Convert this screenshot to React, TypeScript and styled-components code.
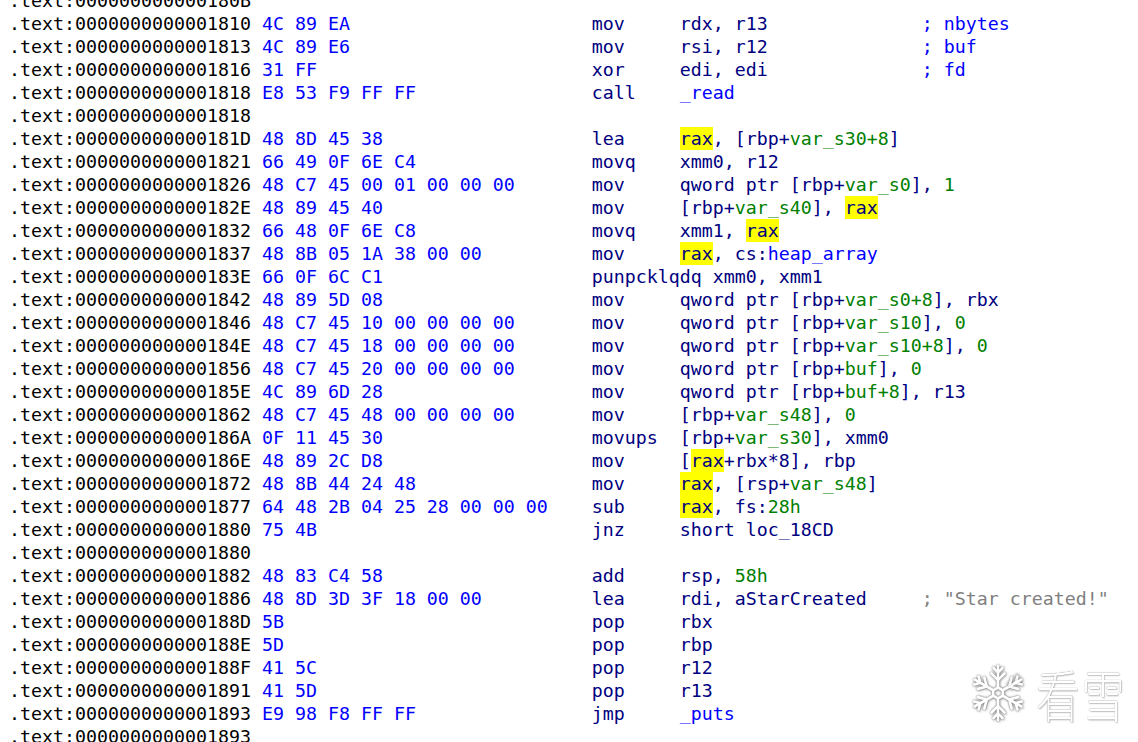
import React from 'react';
import styled, { createGlobalStyle } from 'styled-components';

type Kind = 'r' | 'v' | 'n' | 'h';

const Global = createGlobalStyle`
  html, body { margin: 0; padding: 0; background: #ffffff; }
  body { overflow: hidden; }
`;

const Screen = styled.div`
  position: relative;
  width: 1138px;
  height: 742px;
  overflow: hidden;
  background: #ffffff;
`;

const Listing = styled.div`
  display: flex;
  flex-direction: column;
  margin-top: -11.5px;
  padding-left: 9px;
  font-family: "DejaVu Sans Mono", "Liberation Mono", monospace;
  font-size: 18.27px;
  line-height: 23px;
  white-space: pre;
`;

const Row = styled.div`
  display: flex;
  height: 23px;
`;

const Addr = styled.span`
  flex: none;
  width: 23ch;
  color: #000000;
`;

const Bytes = styled.span`
  flex: none;
  width: 30ch;
  color: #0000ff;
`;

const Mnem = styled.span`
  flex: none;
  min-width: 7ch;
  margin-right: 1ch;
  color: #000080;
`;

const Ops = styled.span<{ $w?: number }>`
  flex: none;
  color: #000080;
  ${(p) => (p.$w ? `width: ${p.$w}ch;` : '')}
`;

const tokColor: Record<Kind, string> = {
  r: '#000080',
  v: '#008000',
  n: '#0000ff',
  h: '#000080',
};

const Tok = styled.span<{ $k: Kind }>`
  color: ${(p) => tokColor[p.$k]};
  ${(p) =>
    p.$k === 'h'
      ? `display: inline-block; height: 23px; background: #ffff00;`
      : ''}
`;

const Comment = styled.span<{ $tone: 'blue' | 'gray' }>`
  flex: none;
  color: ${(p) => (p.$tone === 'blue' ? '#0000ff' : '#808080')};
`;

const Watermark = styled.div`
  position: absolute;
  left: 972px;
  top: 663px;
  width: 170px;
  display: flex;
  align-items: center;
  gap: 12px;
  white-space: nowrap;
  pointer-events: none;
`;

const Flake = styled.svg`
  flex: none;
  filter: drop-shadow(0 0 0.8px rgba(0, 0, 0, 0.6)) drop-shadow(1px 1px 1px rgba(0, 0, 0, 0.2));
`;

const Brand = styled.span`
  flex: none;
  display: inline-block;
  font-family: "Noto Sans CJK SC", "Noto Sans CJK JP", sans-serif;
  font-weight: 300;
  font-size: 56px;
  line-height: 60px;
  letter-spacing: 2px;
  color: #ffffff;
  transform: scaleX(0.78);
  transform-origin: left center;
  text-shadow: 0 0 1px rgba(0, 0, 0, 0.6), 1px 1px 1.5px rgba(0, 0, 0, 0.22);
`;

interface Line {
  a: string;
  b?: string;
  m?: string;
  o?: string;
  w?: number;
  c?: string;
  ct?: 'blue' | 'gray';
}

const lines: Line[] = [
  { a: '000000000000180B' },
  { a: '0000000000001810', b: '4C 89 EA', m: 'mov', o: 'rdx, r13', w: 22, c: '; nbytes', ct: 'blue' },
  { a: '0000000000001813', b: '4C 89 E6', m: 'mov', o: 'rsi, r12', w: 22, c: '; buf', ct: 'blue' },
  { a: '0000000000001816', b: '31 FF', m: 'xor', o: 'edi, edi', w: 22, c: '; fd', ct: 'blue' },
  { a: '0000000000001818', b: 'E8 53 F9 FF FF', m: 'call', o: '{n:_read}' },
  { a: '0000000000001818' },
  { a: '000000000000181D', b: '48 8D 45 38', m: 'lea', o: '{h:rax}, [rbp+{v:var_s30+8}]' },
  { a: '0000000000001821', b: '66 49 0F 6E C4', m: 'movq', o: 'xmm0, r12' },
  { a: '0000000000001826', b: '48 C7 45 00 01 00 00 00', m: 'mov', o: 'qword ptr [rbp+{v:var_s0}], {v:1}' },
  { a: '000000000000182E', b: '48 89 45 40', m: 'mov', o: '[rbp+{v:var_s40}], {h:rax}' },
  { a: '0000000000001832', b: '66 48 0F 6E C8', m: 'movq', o: 'xmm1, {h:rax}' },
  { a: '0000000000001837', b: '48 8B 05 1A 38 00 00', m: 'mov', o: '{h:rax}, cs:{n:heap_array}' },
  { a: '000000000000183E', b: '66 0F 6C C1', m: 'punpcklqdq', o: 'xmm0, xmm1' },
  { a: '0000000000001842', b: '48 89 5D 08', m: 'mov', o: 'qword ptr [rbp+{v:var_s0+8}], rbx' },
  { a: '0000000000001846', b: '48 C7 45 10 00 00 00 00', m: 'mov', o: 'qword ptr [rbp+{v:var_s10}], {v:0}' },
  { a: '000000000000184E', b: '48 C7 45 18 00 00 00 00', m: 'mov', o: 'qword ptr [rbp+{v:var_s10+8}], {v:0}' },
  { a: '0000000000001856', b: '48 C7 45 20 00 00 00 00', m: 'mov', o: 'qword ptr [rbp+{v:buf}], {v:0}' },
  { a: '000000000000185E', b: '4C 89 6D 28', m: 'mov', o: 'qword ptr [rbp+{v:buf+8}], r13' },
  { a: '0000000000001862', b: '48 C7 45 48 00 00 00 00', m: 'mov', o: '[rbp+{v:var_s48}], {v:0}' },
  { a: '000000000000186A', b: '0F 11 45 30', m: 'movups', o: '[rbp+{v:var_s30}], xmm0' },
  { a: '000000000000186E', b: '48 89 2C D8', m: 'mov', o: '[{h:rax}+rbx*8], rbp' },
  { a: '0000000000001872', b: '48 8B 44 24 48', m: 'mov', o: '{h:rax}, [rsp+{v:var_s48}]' },
  { a: '0000000000001877', b: '64 48 2B 04 25 28 00 00 00', m: 'sub', o: '{h:rax}, fs:{v:28h}' },
  { a: '0000000000001880', b: '75 4B', m: 'jnz', o: 'short loc_18CD' },
  { a: '0000000000001880' },
  { a: '0000000000001882', b: '48 83 C4 58', m: 'add', o: 'rsp, {v:58h}' },
  { a: '0000000000001886', b: '48 8D 3D 3F 18 00 00', m: 'lea', o: 'rdi, aStarCreated', w: 22, c: '; "Star created!"', ct: 'gray' },
  { a: '000000000000188D', b: '5B', m: 'pop', o: 'rbx' },
  { a: '000000000000188E', b: '5D', m: 'pop', o: 'rbp' },
  { a: '000000000000188F', b: '41 5C', m: 'pop', o: 'r12' },
  { a: '0000000000001891', b: '41 5D', m: 'pop', o: 'r13' },
  { a: '0000000000001893', b: 'E9 98 F8 FF FF', m: 'jmp', o: '{n:_puts}' },
  { a: '0000000000001893' },
];

function parseOps(src: string): { t: string; k: Kind }[] {
  const out: { t: string; k: Kind }[] = [];
  const re = /\{(\w):([^}]*)\}/g;
  let last = 0;
  let m: RegExpExecArray | null;
  while ((m = re.exec(src)) !== null) {
    if (m.index > last) out.push({ t: src.slice(last, m.index), k: 'r' });
    out.push({ t: m[2], k: m[1] as Kind });
    last = m.index + m[0].length;
  }
  if (last < src.length) out.push({ t: src.slice(last), k: 'r' });
  return out;
}

const Snowflake: React.FC = () => (
  <Flake width="52" height="58" viewBox="-26 -29 52 58">
    <g stroke="#ffffff" strokeWidth="2.6" strokeLinecap="round" fill="none">
      {[0, 60, 120, 180, 240, 300].map((r) => (
        <g key={r} transform={`rotate(${r})`}>
          <line x1="0" y1="-6" x2="0" y2="-27" />
          <polyline points="-6.5,-19.5 0,-13 6.5,-19.5" />
          <polyline points="-4.5,-25 0,-20.5 4.5,-25" />
        </g>
      ))}
      <polygon points="0,-5.5 4.8,-2.75 4.8,2.75 0,5.5 -4.8,2.75 -4.8,-2.75" />
    </g>
    <g stroke="#dddddd" strokeWidth="0.8" fill="none">
      <line x1="8" y1="-9" x2="20" y2="-20" />
      <line x1="10" y1="-6" x2="23" y2="-17" />
      <line x1="12" y1="-3" x2="24" y2="-13" />
    </g>
  </Flake>
);

export default function App() {
  return (
    <Screen>
      <Global />
      <Listing>
        {lines.map((l, i) => (
          <Row key={i}>
            <Addr>.text:{l.a}</Addr>
            {l.m && (
              <>
                <Bytes>{l.b}</Bytes>
                <Mnem>{l.m}</Mnem>
                <Ops $w={l.w}>
                  {parseOps(l.o || '').map((t, j) => (
                    <Tok key={j} $k={t.k}>
                      {t.t}
                    </Tok>
                  ))}
                </Ops>
                {l.c && <Comment $tone={l.ct || 'blue'}>{l.c}</Comment>}
              </>
            )}
          </Row>
        ))}
      </Listing>
      <Watermark>
        <Snowflake />
        <Brand>看雪</Brand>
      </Watermark>
    </Screen>
  );
}
